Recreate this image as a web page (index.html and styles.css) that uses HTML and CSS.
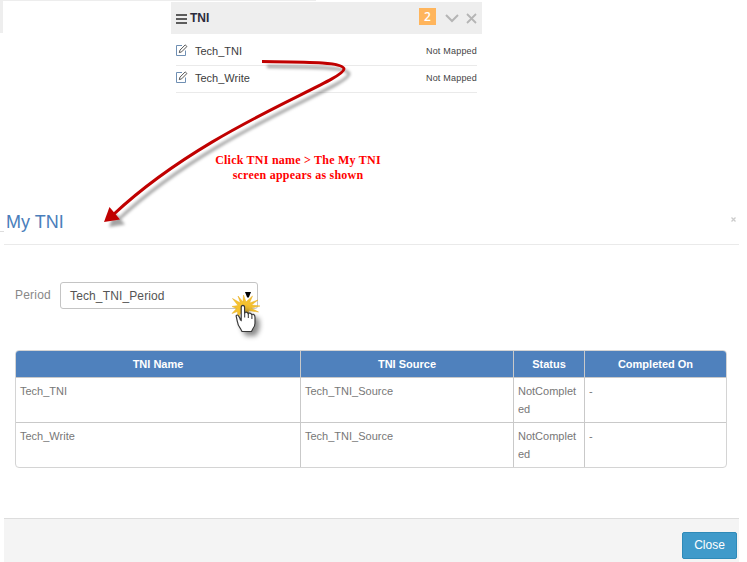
FILE: index.html
```
<!DOCTYPE html>
<html lang="en">
<head>
<meta charset="utf-8">
<title>My TNI</title>
<link rel="stylesheet" href="styles.css">
</head>
<body>
<main class="page">
  <section class="dashboard">
    <div class="prev-panel"></div>
    <div class="widget">
      <header class="widget-head">
        <svg class="bars" width="11" height="10" viewBox="0 0 11 10"><path d="M0 1h11M0 5h11M0 9h11" stroke="#5c5c5c" stroke-width="2"/></svg>
        <h2>TNI</h2>
        <span class="badge">2</span>
        <svg class="chevron" width="14" height="9" viewBox="0 0 14 9"><path d="M1 1l6 6 6-6" fill="none" stroke="#b5b5b5" stroke-width="2"/></svg>
        <svg class="cross" width="11" height="11" viewBox="0 0 11 11"><path d="M1 1l9 9M10 1l-9 9" stroke="#b5b5b5" stroke-width="1.8"/></svg>
      </header>
      <ul class="items">
        <li><svg class="edit" width="12" height="12" viewBox="0 0 12 12"><path d="M6 1.5H.5v10h9V6.500" fill="none" stroke="#6f8fb3"/><path d="M3.300 8.600l.7-2.500L9.200.9l1.700 1.600-5.200 5.300z" fill="#fff" stroke="#555"/></svg><span>Tech_TNI</span><small>Not Mapped</small></li>
        <li><svg class="edit" width="12" height="12" viewBox="0 0 12 12"><path d="M6 1.5H.5v10h9V6.500" fill="none" stroke="#6f8fb3"/><path d="M3.300 8.600l.7-2.500L9.200.9l1.700 1.600-5.200 5.300z" fill="#fff" stroke="#555"/></svg><span>Tech_Write</span><small>Not Mapped</small></li>
      </ul>
    </div>
    <p class="callout">Click TNI name &gt; The My TNI<br>screen appears as shown</p>
  </section>

  <section class="modal">
    <header class="modal-head">
      <h1>My TNI</h1>
      <svg class="dismiss" width="5" height="5" viewBox="0 0 5 5"><path d="M.5.5l4 4M4.500.500l-4 4" stroke="#ccc" stroke-width="1.300"/></svg>
    </header>
    <div class="modal-body">
      <div class="field">
        <label>Period</label>
        <div class="select"><span>Tech_TNI_Period</span><svg width="6" height="6" viewBox="0 0 6 6"><path d="M0 0h6L3.800 5.500H2.200z" fill="#000"/></svg></div>
      </div>
      <div class="table">
        <div class="tr th"><div>TNI Name</div><div>TNI Source</div><div>Status</div><div>Completed On</div></div>
        <div class="tr"><div>Tech_TNI</div><div>Tech_TNI_Source</div><div>NotCompleted</div><div>-</div></div>
        <div class="tr"><div>Tech_Write</div><div>Tech_TNI_Source</div><div>NotCompleted</div><div>-</div></div>
      </div>
    </div>
    <footer class="modal-foot"><button type="button">Close</button></footer>
  </section>

  <svg class="overlay" width="747" height="562" viewBox="0 0 747 562">
    <defs>
      <filter id="soft" x="-20%" y="-20%" width="150%" height="150%"><feDropShadow dx="5" dy="5" stdDeviation="1.600" flood-color="#000" flood-opacity=".36"/></filter>
      <filter id="handshadow" x="-20%" y="-20%" width="180%" height="160%"><feDropShadow dx="4" dy="4" stdDeviation="2.400" flood-color="#000" flood-opacity=".45"/></filter>
    </defs>
    <path d="M0 231.500h4" stroke="#ddd"/>
    <g filter="url(#soft)">
      <path d="M262 61.500C300 62 344 61.500 344 69C343 82 208 126 114 214" fill="none" stroke="#c00000" stroke-width="3"/>
      <path d="M104 222l5.500-15 10.500 12.500z" fill="#c00000"/>
    </g>
    <path d="M243 302L243.500 295L246 302L252.500 296L249.500 303L258 300L251.500 305L260 306L251 308L258.500 312L248 310.500L250 315L244 311L240 314L238 319L237.500 311.500L232 313.500L236.500 308.500L232 306.500L238 305.500L232.500 298.500L240.500 303L238 296z" fill="#f5c22f" stroke="#e7ad20" stroke-width=".5"/>
    <g filter="url(#handshadow)"><path d="M241.200 320.500V307.500q0-2.200 1.700-2.200t1.700 2.200V313.500q0-1.500 1.800-1.300t1.800 2.100q0-1.500 1.800-1.200t1.800 2.300q.2-1.500 1.700-1t1.500 2.800v6q0 3.200-2 5.500l-1.500 2.800h-9.500l-1.700-3.200q-2.500-3-3-7-.7-3.700-1.200-5.500 1.200-1.700 2.600.3t1.700 3.900z" fill="#fff" stroke="#383838" stroke-width="1.200"/></g>
    <path d="M244.700 313v4.500M248.300 314v4M251.900 315.500v3.500" stroke="#333" fill="none"/>
  </svg>
</main>
</body>
</html>
```
FILE: styles.css
```
* { box-sizing: border-box; }
body { margin: 0; background: #fff; font-family: "Liberation Sans", Arial, sans-serif; }
.page { position: relative; width: 747px; height: 562px; overflow: hidden; }
h1, h2, p, ul { margin: 0; padding: 0; }
.dashboard { height: 200px; display: grid; grid-template-columns: 171px 311px 1fr; grid-template-rows: 93px 1fr; }
.prev-panel { width: 316px; height: 33px; border-top: 1px solid #ededed; border-left: 3px solid #eee; }
.widget { position: relative; padding-top: 2px; }
.widget-head { display: flex; align-items: center; height: 32px; padding: 0 5px; background: #eee; }
.widget-head .bars { margin-top: 2px; }
.widget-head h2 { margin-left: 3px; font-size: 12px; line-height: 16px; color: #2b2b3d; }
.badge { width: 17px; height: 17px; margin: -3px 9px 0 auto; background: #ffb55c; color: #fff; font: 12px/18px "Open Sans", sans-serif; font-weight: 600; text-align: center; }
.cross { margin-left: 7px; }
.items { list-style: none; margin: 0 5px; padding-top: 5px; }
.items li { display: flex; align-items: center; height: 27px; border-bottom: 1px solid #eaeaea; font-size: 11px; line-height: 16px; color: #3c3c3c; }
.edit { margin-top: -5px; }
.items span { margin-left: 7px; }
.items small { margin-left: auto; font-size: 9px; letter-spacing: .2px; color: #444; }
.items small, .items span { padding-bottom: 2px; }
.callout { grid-column: 1 / -1; margin: 60px 0 0 198px; width: 200px; font: bold 12px/15px "Liberation Serif", "Times New Roman", serif; letter-spacing: .23px; text-align: center; color: #f00; }
.modal { width: 735px; height: 362px; margin-left: 4px; display: flex; flex-direction: column; }
.modal-head { display: flex; justify-content: space-between; height: 45px; border-bottom: 1px solid #eaeaea; padding: 10px 3px 0 2px; }
.modal-head h1 { font-size: 18px; line-height: 24px; font-weight: normal; color: #4a7ebb; }
.dismiss { margin-top: 7px; }
.modal-body { flex: 1; padding: 37px 12px 0 11px; }
.field { display: flex; height: 27px; color: #888; font-size: 12px; line-height: 26px; }
.field label { width: 45px; letter-spacing: .2px; }
.select { display: flex; justify-content: space-between; width: 198px; height: 27px; border: 1px solid #c4c4c4; border-radius: 3px; padding: 0 6px 0 9px; color: #555; line-height: 26px; letter-spacing: .13px; }
.select svg { margin-top: 9px; }
.table { margin-top: 41px; border: 1px solid #d4d4d4; border-radius: 4px; overflow: hidden; font-size: 11px; line-height: 18px; color: #777; }
.tr { display: grid; grid-template-columns: 285px 213px 71px 1fr; height: 45px; border-bottom: 1px solid #c9c9c9; }
.tr:last-child { height: 44px; border-bottom: 0; }
.tr > div { padding: 4px 4px; border-right: 1px solid #c9c9c9; overflow-wrap: anywhere; }
.tr > div:last-child { border-right: 0; }
.th { height: 27px; background: #4f81bd; color: #fff; font-weight: bold; text-align: center; }
.modal-foot { height: 44px; border-top: 1px solid #ddd; background: #f4f4f4; display: flex; justify-content: flex-end; padding: 13px 2px 0; }
button { width: 55px; height: 27px; padding: 0; border: 1px solid #2e8ab8; border-radius: 2px; background: #3f9aca; color: #fff; font: 12px/23px "Liberation Sans", Arial, sans-serif; }
.overlay { position: absolute; left: 0; top: 0; pointer-events: none; }
```
